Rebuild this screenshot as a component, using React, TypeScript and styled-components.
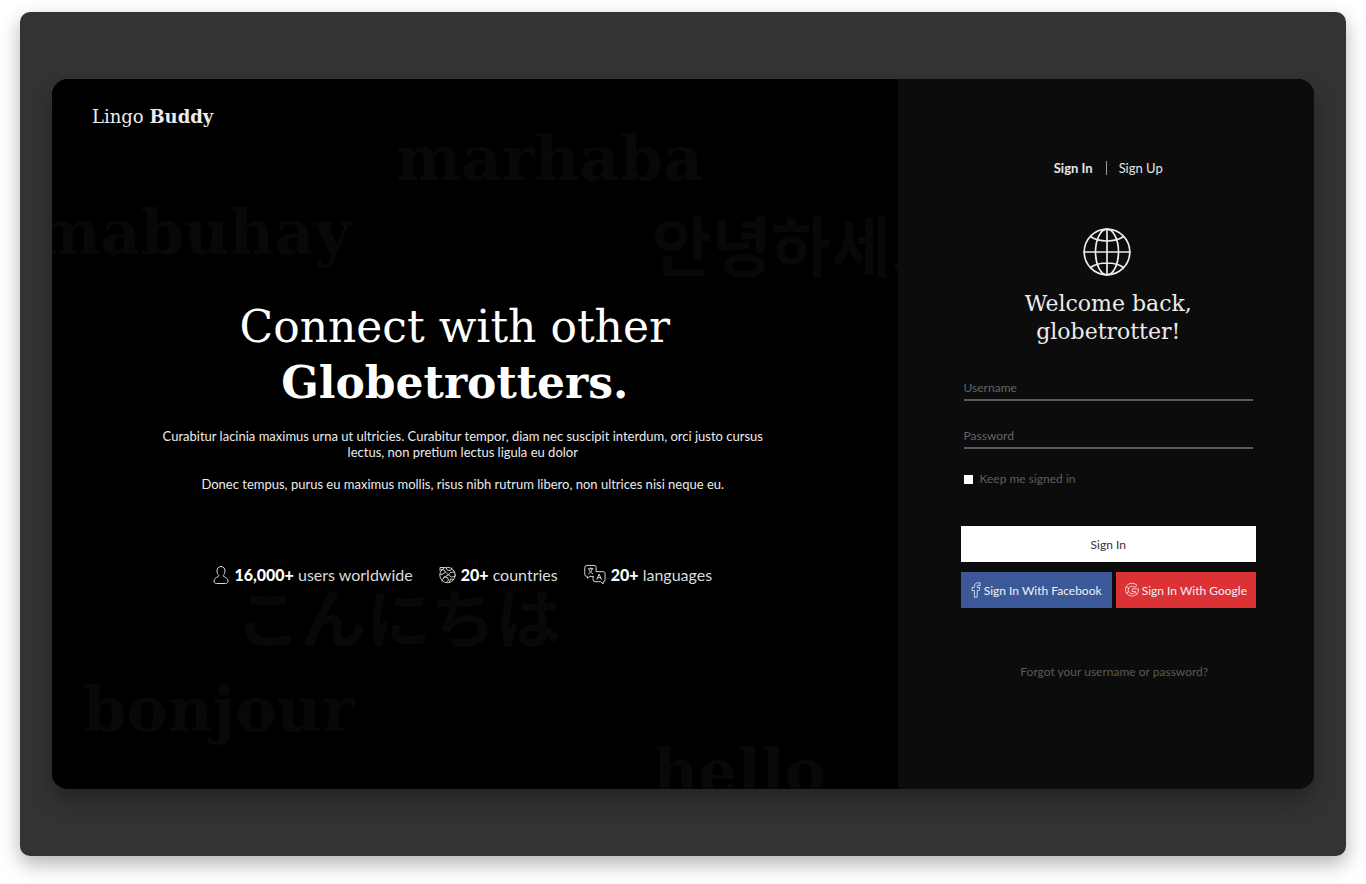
import React from "react";
import styled, { createGlobalStyle } from "styled-components";

const sans = `Lato, "Open Sans", sans-serif`;
const slab = `"DejaVu Serif", "Noto Sans CJK JP", serif`;

const GlobalStyle = createGlobalStyle`
  * { box-sizing: border-box; }
  body { margin: 0; background: #fff; font-family: ${sans}; color: #ececec; }
  h1, h2, p, ul { margin: 0; padding: 0; font-weight: 400; }
  button, input { font-family: inherit; }
`;

const Page = styled.div`
  min-height: 100vh;
  padding: 12px 20px 28px;
  display: flex;
`;

const Stage = styled.div`
  flex: 1;
  display: flex;
  padding: 67px 32px;
  background: #333;
  border-radius: 10px;
  box-shadow: 0 8px 20px rgba(0, 0, 0, 0.3);
`;

const Card = styled.main`
  flex: 1;
  display: grid;
  grid-template-columns: 67fr 33fr;
  overflow: hidden;
  border-radius: 16px;
  background: #000;
  box-shadow: 0 12px 22px rgba(0, 0, 0, 0.3);
`;

const Hero = styled.section`
  position: relative;
  overflow: hidden;
  padding: 24px 40px;
  background: #000;
`;

const Greeting = styled.span<{ $left: number; $top: number; $lang?: string }>`
  position: absolute;
  left: ${(p) => p.$left}px;
  top: ${(p) => p.$top}px;
  color: #080808;
  font: 700 ${(p) => (p.$lang ? 65 : 62)}px/80px
    ${(p) => (p.$lang ? `"Noto Sans CJK ${p.$lang}", sans-serif` : slab)};
  white-space: nowrap;
`;

const Brand = styled.div`
  position: relative;
  font: 400 18px/28px ${slab};
`;

const Pitch = styled.div`
  position: relative;
  margin-top: 168px;
  padding-right: 24px;
  text-align: center;
`;

const Headline = styled.h1`
  padding-right: 16px;
  font: 400 44px/56px ${slab};
  color: #fff;
  strong { display: block; }
`;

const Copy = styled.p`
  max-width: 640px;
  margin: 16px auto 0;
  font-size: 13px;
  line-height: 16px;
  ${Headline} + & { margin-top: 17px; }
`;

const Stats = styled.ul`
  display: flex;
  justify-content: center;
  gap: 26px;
  margin-top: 71px;
  list-style: none;
  font-size: 16px;
  line-height: 24px;
`;

const Stat = styled.li`
  display: flex;
  align-items: center;
  gap: 5px;
  white-space: nowrap;
  color: #dcdcdc;
  strong { font-weight: 900; color: #fff; }
`;

const Panel = styled.section`
  display: flex;
  flex-direction: column;
  padding: 80px 58px 40px 63px;
  background: #0c0c0c;
`;

const Tabs = styled.nav`
  display: flex;
  justify-content: center;
  align-items: center;
  font-size: 13px;
  line-height: 18px;
`;

const Tab = styled.a<{ $active?: boolean }>`
  padding: 0 13px;
  color: #e6e6e6;
  font-weight: ${(p) => (p.$active ? 700 : 400)};
  text-decoration: none;
  & + & { background: linear-gradient(#999, #999) left center / 1px 14px no-repeat; }
`;

const Emblem = styled.div`
  display: flex;
  justify-content: center;
  margin-top: 51px;
  padding-right: 2px;
`;

const Welcome = styled.h2`
  margin-top: 14px;
  font: 400 22px/28px ${slab};
  text-align: center;
`;

const Form = styled.form`
  display: flex;
  flex-direction: column;
  margin-top: 29px;
`;

const Field = styled.input`
  height: 26px;
  margin: 0 3px 22px;
  padding: 0;
  border: 0;
  border-bottom: 2px solid #5c5c5c;
  background: transparent;
  color: #e6e6e6;
  font-size: 12px;
  outline: 0;
  &::placeholder { color: #646464; opacity: 1; }
`;

const Remember = styled.label`
  display: flex;
  align-items: center;
  gap: 7px;
  margin: 0 3px;
  color: #5e5e5e;
  font-size: 12px;
  line-height: 16px;
  input {
    appearance: none;
    width: 9px;
    height: 9px;
    margin: 0;
    background: #fff;
  }
  input:checked { box-shadow: inset 0 0 0 2px #fff; background: #3b5998; }
`;

const Button = styled.button<{ $bg?: string }>`
  display: flex;
  align-items: center;
  justify-content: center;
  gap: 3px;
  height: 36px;
  padding: 0;
  border: 0;
  background: ${(p) => p.$bg ?? "#fff"};
  color: ${(p) => (p.$bg ? "#f0f0f5" : "#333")};
  font-size: 12px;
  white-space: nowrap;
  cursor: pointer;
`;

const Actions = styled.div`
  display: grid;
  grid-template-columns: 151fr 140fr;
  gap: 10px 4px;
  margin-top: 39px;
  ${Button}:first-child { grid-column: 1 / -1; }
`;

const Forgot = styled.a`
  align-self: center;
  margin: 56px 0 0 12px;
  color: #5a5a5a;
  font-size: 12px;
  line-height: 16px;
  text-decoration: none;
`;

const Line = styled.svg`
  flex: none;
  fill: none;
  stroke: currentColor;
  stroke-linecap: round;
  stroke-linejoin: round;
`;

const UserIcon = () => (
  <Line width="16" height="20" viewBox="0 0 16 20" strokeWidth="1" aria-hidden>
    <path d="M8 1.500c-2.600 0-4 1.900-4 4.500 0 1.900.7 3.300 1.600 4.200.4.500.2 1.100-.4 1.400C2.700 12.600 1 13.900 1 16.200c0 1.500 1 2.300 2.600 2.300h8.800c1.600 0 2.600-.8 2.600-2.300 0-2.300-1.700-3.600-4.200-4.600-.6-.3-.8-.9-.4-1.400C11.300 9.300 12 7.900 12 6c0-2.600-1.400-4.500-4-4.500z" />
  </Line>
);

const WorldIcon = () => (
  <Line width="17" height="20" viewBox="0 0 17 20" strokeWidth=".9" aria-hidden>
    <circle cx="8.500" cy="10" r="7.700" />
    <path d="M1 5.500V2.500h4.500M2 4.500l3 .5 1.500 2L4 9l-3 .5M3 16l2-4 3.500.5 1 2.500-2 2.500M7 2.500l1 2.500 3.500.5L13 3M15.500 7l-4 .5-2 2.500 3 2 3.500-.5M14.500 14.500l-3-.5-1 3.200M6.500 7l3 3L5 12" />
  </Line>
);

const LanguagesIcon = () => (
  <Line width="22" height="22" viewBox="0 0 23 22" strokeWidth="1" aria-hidden>
    <path d="M9.500 12.500H6L3.500 14.500v-2H3a2.200 2.200 0 0 1-2.200-2.200V3.200A2.200 2.200 0 0 1 3 1h7.500a2.200 2.200 0 0 1 2.200 2.200V7" />
    <path d="M12.700 7.500H20a2 2 0 0 1 2 2V16a2 2 0 0 1-2 2v2.500L17.500 18H11.500a2 2 0 0 1-2-2v-3.500" />
    <path d="M4.500 4.500h5M7 3.500v1M5 9.500c2-1 3.200-2.500 3.500-5M5.300 5.500c.7 1.800 2 3 3.700 4M13.500 15.500l2.300-5.500 2.300 5.500M14.300 13.800h3" />
  </Line>
);

const GlobeIcon = () => (
  <Line width="48" height="48" viewBox="0 0 48 48" strokeWidth="1.700" aria-hidden>
    <circle cx="24" cy="24" r="22.800" />
    <ellipse cx="24" cy="24" rx="11.500" ry="22.800" />
    <path d="M24 1v46M1 24h46M7.500 8.500C16 14.500 32 14.500 40.500 8.500M7.500 39.500c8.500-6 24.500-6 33 0" />
  </Line>
);

const FacebookIcon = () => (
  <Line width="10" height="16" viewBox="0 0 10 16" strokeWidth=".8" aria-hidden>
    <path d="M8.800.8H7C4.700.8 3.400 2.200 3.400 4.200V5.500H1v3h2.400v6.700h2.800V8.500h2L8.800 5.500H6.200V4.300c0-.6.300-.9.900-.9h1.700z" />
  </Line>
);

const GoogleIcon = () => (
  <Line width="14" height="16" viewBox="0 0 14 16" strokeWidth=".8" aria-hidden>
    <path d="M11.800 3.200A6.500 6.500 0 1 0 13.500 8V6.900H7.200v2.600h3.300A3.800 3.800 0 1 1 9.700 5.200z" />
    <path d="M1.300 5l2.500 1.500M1.300 11l2.500-1.500M10.200 10.500l2 1.800" />
  </Line>
);

export default function App() {
  return (
    <>
      <GlobalStyle />
      <Page>
        <Stage>
          <Card>
            <Hero>
              <div aria-hidden>
                <Greeting $left={344} $top={40}>marhaba</Greeting>
                <Greeting $left={-17} $top={114}>mabuhay</Greeting>
                <Greeting $left={600} $top={124} $lang="KR">안녕하세요</Greeting>
                <Greeting $left={184} $top={496} $lang="JP">こんにちは</Greeting>
                <Greeting $left={31} $top={591}>bonjour</Greeting>
                <Greeting $left={601} $top={653}>hello</Greeting>
              </div>
              <Brand>Lingo <strong>Buddy</strong></Brand>
              <Pitch>
                <Headline>Connect with other <strong>Globetrotters.</strong></Headline>
                <Copy>
                  Curabitur lacinia maximus urna ut ultricies. Curabitur tempor, diam nec suscipit
                  interdum, orci justo cursus lectus, non pretium lectus ligula eu dolor
                </Copy>
                <Copy>
                  Donec tempus, purus eu maximus mollis, risus nibh rutrum libero, non ultrices nisi
                  neque eu.
                </Copy>
                <Stats>
                  <Stat><UserIcon /><span><strong>16,000+</strong> users worldwide</span></Stat>
                  <Stat><WorldIcon /><span><strong>20+</strong> countries</span></Stat>
                  <Stat><LanguagesIcon /><span><strong>20+</strong> languages</span></Stat>
                </Stats>
              </Pitch>
            </Hero>
            <Panel>
              <Tabs>
                <Tab href="#signin" $active>Sign In</Tab>
                <Tab href="#signup">Sign Up</Tab>
              </Tabs>
              <Emblem><GlobeIcon /></Emblem>
              <Welcome>Welcome back,<br />globetrotter!</Welcome>
              <Form onSubmit={(e) => e.preventDefault()}>
                <Field type="text" placeholder="Username" aria-label="Username" />
                <Field type="password" placeholder="Password" aria-label="Password" />
                <Remember><input type="checkbox" />Keep me signed in</Remember>
                <Actions>
                  <Button type="submit">Sign In</Button>
                  <Button type="button" $bg="#3b5998"><FacebookIcon />Sign In With Facebook</Button>
                  <Button type="button" $bg="#dc3236"><GoogleIcon />Sign In With Google</Button>
                </Actions>
                <Forgot href="#forgot">Forgot your username or password?</Forgot>
              </Form>
            </Panel>
          </Card>
        </Stage>
      </Page>
    </>
  );
}
